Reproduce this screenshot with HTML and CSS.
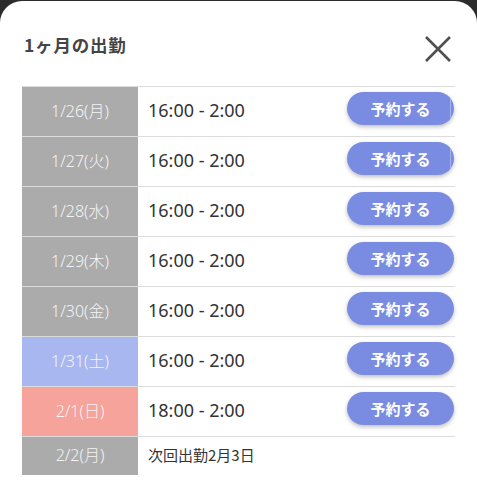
FILE: index.html
```html
<!DOCTYPE html>
<html lang="ja">
<head>
    <meta charset="UTF-8">
    <meta name="viewport" content="width=device-width, initial-scale=1.0">
    <title>1ヶ月の出勤</title>
    <link rel="stylesheet" href="styles.css">
</head>
<body>
<div class="sheet">
    <div class="sheet-head">
        <h2 class="sheet-title">1ヶ月の出勤</h2>
        <span class="close">
            <svg width="28" height="28" viewBox="0 0 28 28"><path d="M2 2 L26 26 M26 2 L2 26" stroke="#505050" stroke-width="2.6" fill="none"/></svg>
        </span>
    </div>

    <div class="schedule">
        <div class="row">
            <div class="day">1/26(月)</div>
            <div class="time">16:00 - 2:00</div>
            <a class="reserve edge">予約する</a>
        </div>
        <div class="row">
            <div class="day">1/27(火)</div>
            <div class="time">16:00 - 2:00</div>
            <a class="reserve edge">予約する</a>
        </div>
        <div class="row">
            <div class="day">1/28(水)</div>
            <div class="time">16:00 - 2:00</div>
            <a class="reserve">予約する</a>
        </div>
        <div class="row">
            <div class="day">1/29(木)</div>
            <div class="time">16:00 - 2:00</div>
            <a class="reserve">予約する</a>
        </div>
        <div class="row">
            <div class="day">1/30(金)</div>
            <div class="time">16:00 - 2:00</div>
            <a class="reserve">予約する</a>
        </div>
        <div class="row">
            <div class="day sat">1/31(土)</div>
            <div class="time">16:00 - 2:00</div>
            <a class="reserve">予約する</a>
        </div>
        <div class="row">
            <div class="day sun">2/1(日)</div>
            <div class="time">18:00 - 2:00</div>
            <a class="reserve">予約する</a>
        </div>
        <div class="row off">
            <div class="day">2/2(月)</div>
            <div class="note">次回出勤2月3日</div>
        </div>
    </div>
</div>
</body>
</html>
```

FILE: styles.css
```css
body {
    margin: 0;
    background: #2c2c2c;
    font-family: "Noto Sans", "Noto Sans CJK JP", sans-serif;
    color: #333;
}
.sheet {
    margin-top: 1px;
    background: white;
    border-radius: 22px 22px 0 0;
    padding: 0 22px 0 22px;
    height: 479px;
    overflow: hidden;
}
.sheet-head {
    display: flex;
    justify-content: space-between;
    align-items: center;
    height: 85px;
    padding-right: 3px;
}
.sheet-title {
    margin: 2px 0 0 2px;
    font-family: "Noto Sans CJK JP", sans-serif;
    font-size: 17.5px;
    font-weight: 700;
    color: #454545;
    letter-spacing: 0.8px;
}
.close { display: flex; margin-top: 10px; }

.schedule { border-top: 1px solid #dcdcdc; }
.row {
    display: grid;
    grid-template-columns: 116px 1fr auto;
    height: 49px;
    border-bottom: 1px solid #dcdcdc;
}
.row.off { height: 38px; border-bottom: none; }
.day {
    background: #ababab;
    color: #f4f4f4;
    font-size: 16px;
    font-weight: 300;
    display: flex;
    align-items: center;
    justify-content: center;
    padding-bottom: 4px;
}
.day.sat { background: #a9b7f1; }
.day.sun { background: #f5a39b; }
.time {
    display: flex;
    align-items: center;
    padding: 0 0 4px 10px;
    font-size: 18px;
    color: #333;
}
.note {
    display: flex;
    align-items: center;
    padding: 0 0 4px 10px;
    font-family: "Noto Sans CJK JP", sans-serif;
    font-size: 15px;
    color: #333;
}
.reserve {
    position: relative;
    align-self: start;
    margin: 5px 1px 0 0;
    width: 107px;
    height: 33px;
    border-radius: 17px;
    background: #7a8ce2;
    color: white;
    font-family: "Noto Sans CJK JP", sans-serif;
    font-size: 15px;
    font-weight: 700;
    display: flex;
    align-items: center;
    justify-content: center;
    box-shadow: 0 2px 4px rgba(0,0,0,0.25);
}
/* faint scroll edge over the first buttons */
.reserve.edge { overflow: hidden; }
.reserve.edge::after {
    content: "";
    position: absolute;
    top: 0;
    bottom: 0;
    right: 3px;
    width: 1px;
    background: #a5b0ef;
}
```
